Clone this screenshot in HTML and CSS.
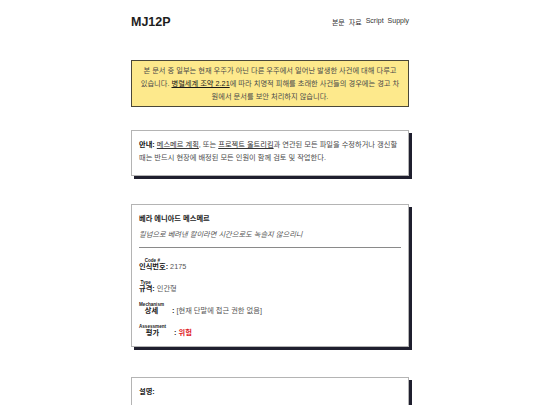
FILE: index.html
```html
<!DOCTYPE html>
<html lang="ko">
<head>
<meta charset="utf-8">
<title>MJ12P</title>
<link rel="stylesheet" href="styles.css">
</head>
<body>
<div class="page">
  <header class="top">
    <div class="logo">MJ12P</div>
    <nav class="nav">
      <a href="#">본문</a>
      <a href="#">자료</a>
      <a href="#">Script</a>
      <a href="#">Supply</a>
    </nav>
  </header>

  <div class="warning">
    본 문서 중 일부는 현재 우주가 아닌 다른 우주에서 일어난 발생한 사건에 대해 다루고 있습니다. <a href="#">병렬세계 조약 2.21</a>에 따라 치명적 피해를 초래한 사건들의 경우에는 경고 차원에서 문서를 보안 처리하지 않습니다.
  </div>

  <div class="card notice">
    <b>안내:</b> <a href="#">메스메르 계획</a>, 또는 <a href="#">프로젝트 울트리킴</a>과 연관된 모든 파일을 수정하거나 갱신할 때는 반드시 현장에 배정된 모든 인원이 함께 검토 및 작업한다.
  </div>

  <div class="card profile">
    <div class="p-title">베라 에니아드 메스메르</div>
    <div class="p-quote">킬넘으로 베려낸 칼이라면 시간으로도 녹슬지 않으리니</div>
    <hr class="rule">
    <div class="field">
      <span class="lab"><span class="rt">Code #</span><span class="base">인식번호</span></span><span class="sep">:</span><span class="val">2175</span>
    </div>
    <div class="field">
      <span class="lab"><span class="rt">Type</span><span class="base">규격</span></span><span class="sep">:</span><span class="val">인간형</span>
    </div>
    <div class="field">
      <span class="lab"><span class="rt">Mechanism</span><span class="base">상세</span></span><span class="sep wide">:</span><span class="val">[현재 단말에 접근 권한 없음]</span>
    </div>
    <div class="field">
      <span class="lab"><span class="rt">Assessment</span><span class="base">평가</span></span><span class="sep wide">:</span><span class="val danger">위험</span>
    </div>
  </div>

  <div class="card desc">
    <div class="p-title">설명:</div>
  </div>
</div>
</body>
</html>
```

FILE: styles.css
```css
html, body {
  margin: 0;
  padding: 0;
  background: #ffffff;
}

body {
  font-family: "Liberation Sans", "Noto Sans CJK KR", sans-serif;
  color: #4a4a4a;
  font-size: 7.25px;
}

.page {
  width: 278px;
  margin: 0 auto;
  padding-bottom: 40px;
}

.top {
  display: flex;
  justify-content: space-between;
  align-items: center;
  padding-top: 14px;
  height: 16px;
}

.logo {
  font-size: 12.5px;
  font-weight: bold;
  color: #1e1e1e;
  line-height: 16px;
}

.nav {
  display: flex;
  gap: 4px;
  font-size: 7px;
}

.nav a {
  color: #333333;
  text-decoration: none;
}

.warning {
  margin-top: 30px;
  background: #fde98c;
  border: 1px solid #4a4738;
  padding: 3px 7.5px;
  line-height: 13px;
  text-align: center;
  color: #4a4a4a;
}

.warning a {
  color: #1a1a1a;
  text-decoration: underline;
}

.card {
  background: #ffffff;
  border: 1px solid #b4b4b4;
  box-shadow: 3px 3px 0 #1f1f2e;
  padding: 7px;
}

.notice {
  margin-top: 23px;
  padding: 7px 7px 11px;
  line-height: 13px;
}

.notice b {
  color: #111111;
}

.notice a {
  color: #333333;
  text-decoration: underline;
}

.profile {
  margin-top: 28px;
  padding-bottom: 9px;
}

.p-title {
  font-weight: bold;
  color: #222222;
  line-height: 13px;
}

.p-quote {
  margin-top: 3px;
  line-height: 13px;
  font-style: italic;
  color: #555555;
}

.rule {
  border: 0;
  border-top: 1px solid #8a8a8a;
  margin: 6px 0 10px;
}

.field {
  display: flex;
  align-items: flex-end;
  line-height: 8px;
  margin-bottom: 9px;
}

.field:last-child {
  margin-bottom: 0;
}

.lab {
  display: inline-flex;
  flex-direction: column;
  align-items: center;
}

.rt {
  font-size: 4.6px;
  line-height: 5px;
  font-weight: bold;
  color: #222222;
}

.base {
  font-weight: bold;
  color: #1a1a1a;
  line-height: 8px;
}

.sep {
  font-weight: bold;
  color: #222222;
  margin-right: 2px;
}

.sep.wide {
  margin-left: 8px;
}

.val {
  color: #555555;
}

.val.danger {
  color: #e0191f;
  font-weight: bold;
}

.desc {
  margin-top: 30px;
  height: 40px;
}
```
